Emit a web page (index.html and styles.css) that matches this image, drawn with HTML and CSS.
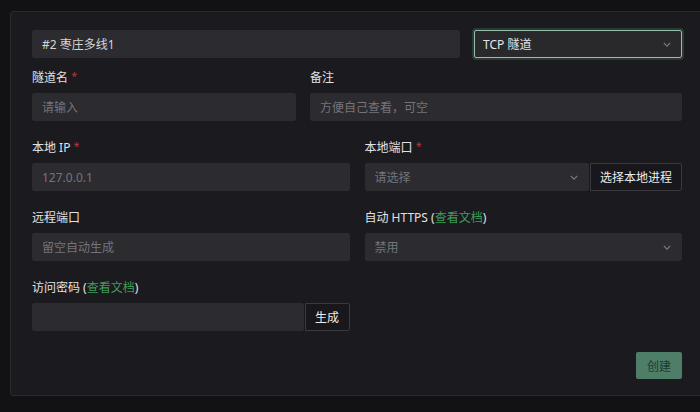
FILE: index.html
```html
<!DOCTYPE html>
<html lang="zh-CN">
<head>
    <meta charset="UTF-8">
    <meta name="viewport" content="width=device-width, initial-scale=1.0">
    <title>新建隧道</title>
    <link rel="stylesheet" href="styles.css">
</head>
<body>
    <div class="panel">
        <div class="row row-top">
            <input type="text" class="field" value="#2 枣庄多线1">
            <div class="select focused">
                <span class="select-value">TCP 隧道</span>
                <svg class="chevron" viewBox="0 0 10 6"><path d="M1 1l4 4 4-4"/></svg>
            </div>
        </div>

        <div class="row row-name">
            <div class="group">
                <label>隧道名 <span class="req">*</span></label>
                <input type="text" class="field" placeholder="请输入">
            </div>
            <div class="group">
                <label>备注</label>
                <input type="text" class="field" placeholder="方便自己查看，可空">
            </div>
        </div>

        <div class="row row-half">
            <div class="group">
                <label>本地 IP <span class="req">*</span></label>
                <input type="text" class="field" placeholder="127.0.0.1">
            </div>
            <div class="group">
                <label>本地端口 <span class="req">*</span></label>
                <div class="combo">
                    <div class="select">
                        <span class="select-placeholder">请选择</span>
                        <svg class="chevron" viewBox="0 0 10 6"><path d="M1 1l4 4 4-4"/></svg>
                    </div>
                    <button class="btn btn-wide">选择本地进程</button>
                </div>
            </div>
        </div>

        <div class="row row-half">
            <div class="group">
                <label>远程端口</label>
                <input type="text" class="field" placeholder="留空自动生成">
            </div>
            <div class="group">
                <label>自动 HTTPS (<a href="#" class="doc">查看文档</a>)</label>
                <div class="select">
                    <span class="select-placeholder">禁用</span>
                    <svg class="chevron" viewBox="0 0 10 6"><path d="M1 1l4 4 4-4"/></svg>
                </div>
            </div>
        </div>

        <div class="row row-half">
            <div class="group">
                <label>访问密码 (<a href="#" class="doc">查看文档</a>)</label>
                <div class="combo">
                    <input type="text" class="field">
                    <button class="btn">生成</button>
                </div>
            </div>
        </div>

        <div class="actions">
            <button class="btn-primary">创建</button>
        </div>
    </div>
</body>
</html>
```

FILE: styles.css
```css
* {
    margin: 0;
    padding: 0;
    box-sizing: border-box;
}

body {
    font-family: "Noto Sans", "Noto Sans CJK SC", sans-serif;
    font-size: 12px;
    background: #121114;
    color: #dcdcde;
    padding: 11px 0 0 10px;
    overflow: hidden;
    height: 412px;
}

.panel {
    width: 700px;
    background: #1b1a1e;
    border: 1px solid #2a292d;
    border-radius: 3px;
    padding: 18px 27px 16px 21px;
}

.row {
    display: grid;
    gap: 14px;
}

.row-top {
    grid-template-columns: 1fr 208px;
    margin-bottom: 10px;
}

.row-name {
    grid-template-columns: 264px 1fr;
    margin-bottom: 17px;
}

.row-half {
    grid-template-columns: 1fr 1fr;
    gap: 15px;
    margin-bottom: 17px;
}

.group {
    display: flex;
    flex-direction: column;
    gap: 5px;
}

label {
    display: block;
    height: 20px;
    line-height: 20px;
    color: #e2e2e4;
    white-space: nowrap;
}

.req {
    color: #b2393a;
    font-size: 11px;
    line-height: 1;
    vertical-align: 2px;
}

.doc {
    color: #3f9d5a;
    text-decoration: none;
}

.field {
    height: 28px;
    width: 100%;
    min-width: 0;
    background: #2c2b2f;
    border: 1px solid #2c2b2f;
    border-radius: 2px;
    padding: 0 9px;
    font: inherit;
    color: #d6d6d8;
    outline: none;
}

.field::placeholder {
    color: #75747a;
}

.select {
    height: 28px;
    background: #2c2b2f;
    border: 1px solid #2c2b2f;
    border-radius: 2px;
    padding: 0 10px 0 9px;
    display: flex;
    align-items: center;
    justify-content: space-between;
    flex: 1;
}

.select.focused {
    background: #29292c;
    border-color: #93bfab;
    box-shadow: 0 0 0 2px rgba(92, 150, 124, 0.25);
    padding-left: 8px;
}

.select-value {
    color: #e4e4e6;
}

.select-placeholder {
    color: #75747a;
}

.chevron {
    width: 8px;
    height: 5px;
    fill: none;
    stroke: #7d7c82;
    stroke-width: 1.4;
}

.combo {
    display: flex;
}

.btn {
    height: 28px;
    background: #18171b;
    border: 1px solid #3a393e;
    border-radius: 0 2px 2px 0;
    color: #ececee;
    font: inherit;
    padding: 0 10px;
    flex-shrink: 0;
    cursor: pointer;
}

.combo .btn {
    margin-left: 1px;
    width: 45px;
    padding: 0;
}

.combo .btn-wide {
    width: 92px;
}

/* margin collapses with the last row's 17px */
.actions {
    display: flex;
    justify-content: flex-end;
    margin-top: 21px;
}

.btn-primary {
    height: 27px;
    width: 46px;
    background: #4e7e68;
    border: none;
    border-radius: 2px;
    color: #1d3a2d;
    font: inherit;
    cursor: pointer;
}
```
